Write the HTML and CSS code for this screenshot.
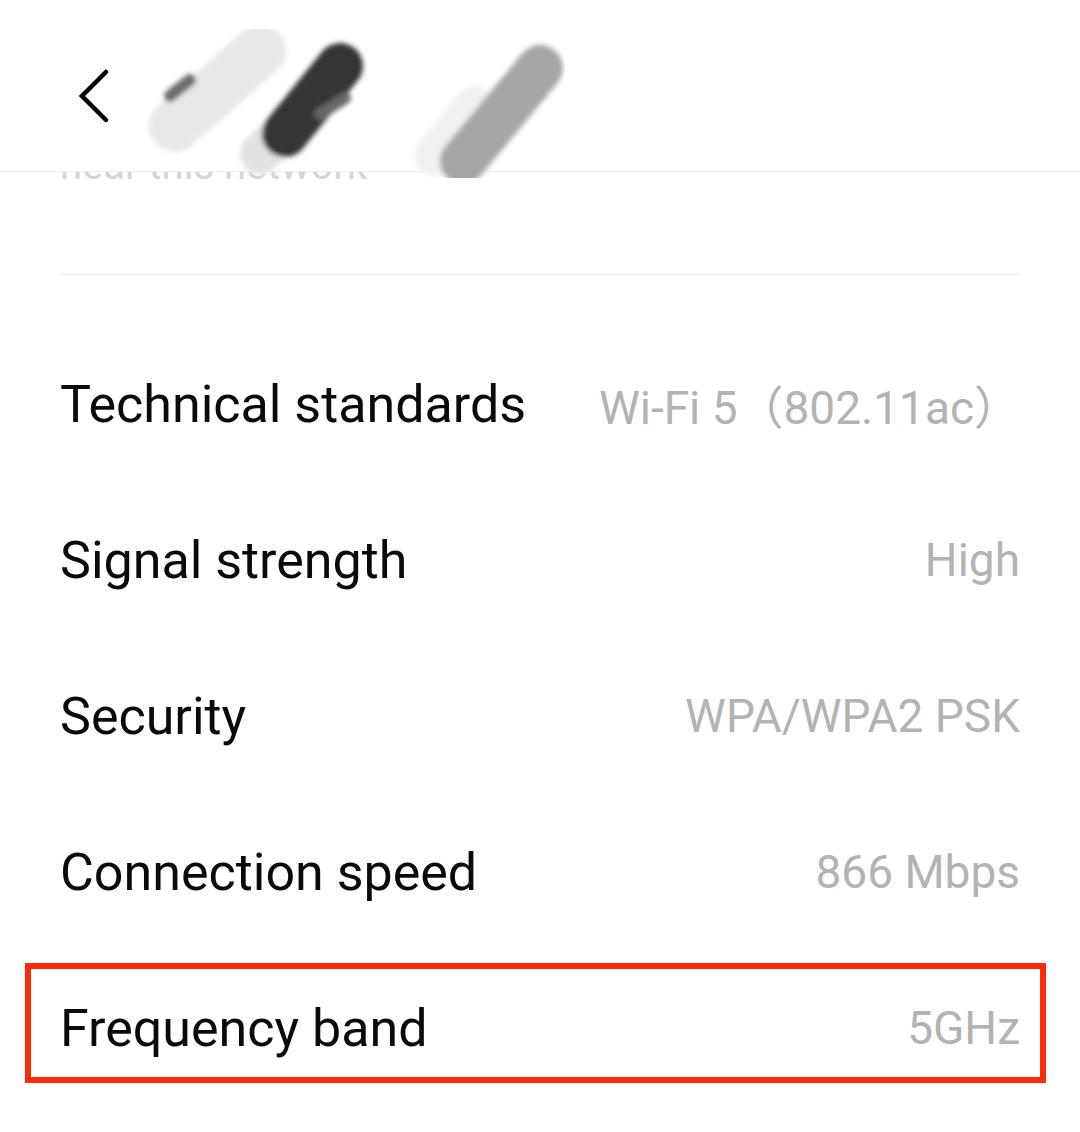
FILE: index.html
```html
<!DOCTYPE html>
<html>
<head>
<meta charset="utf-8">
<link rel="stylesheet" href="styles.css">
</head>
<body>
<div class="page">
  <header class="topbar">
    <svg class="back" width="40" height="60" viewBox="0 0 40 60">
      <polyline points="28,6 4,30 28,54" fill="none" stroke="#000" stroke-width="4.5" stroke-linecap="round" stroke-linejoin="miter"/>
    </svg>
    <svg class="scribble" width="420" height="172" viewBox="0 0 420 172">
      <defs>
        <filter id="soft" x="-20%" y="-20%" width="140%" height="140%"><feGaussianBlur stdDeviation="2.5"/></filter>
      </defs>
      <g filter="url(#soft)" stroke-linecap="round" fill="none">
        <line x1="30" y1="120" x2="115" y2="45" stroke="#e8e8e8" stroke-width="52"/>
        <line x1="115" y1="148" x2="170" y2="95" stroke="#e2e2e2" stroke-width="40"/>
        <line x1="140" y1="128" x2="195" y2="60" stroke="#363636" stroke-width="46"/>
        <line x1="175" y1="108" x2="200" y2="92" stroke="#666" stroke-width="12"/>
        <line x1="25" y1="90" x2="45" y2="74" stroke="#6a6a6a" stroke-width="12"/>
        <line x1="290" y1="150" x2="330" y2="100" stroke="#f0f0f0" stroke-width="40"/>
        <line x1="318" y1="155" x2="395" y2="62" stroke="#a6a6a6" stroke-width="46"/>
      </g>
    </svg>
  </header>
  <div class="clip-line"><span>near this network</span></div>
  <div class="divider"></div>
  <main class="list">
    <div class="row"><span class="label">Technical standards</span><span class="value">Wi-Fi 5（802.11ac）</span></div>
    <div class="row"><span class="label">Signal strength</span><span class="value">High</span></div>
    <div class="row"><span class="label">Security</span><span class="value">WPA/WPA2 PSK</span></div>
    <div class="row"><span class="label">Connection speed</span><span class="value">866 Mbps</span></div>
    <div class="row marked"><span class="label">Frequency band</span><span class="value">5GHz</span><span class="highlight"></span></div>
  </main>
</div>
</body>
</html>
```

FILE: styles.css
```css
html, body {
  margin: 0;
  padding: 0;
  background: #fff;
}
.page {
  width: 1080px;
  height: 1132px;
  overflow: hidden;
  font-family: Roboto, "Noto Sans CJK SC", sans-serif;
}
.topbar {
  height: 172px;
  border-bottom: 1px solid #efefef;
  display: flex;
  align-items: center;
  box-sizing: border-box;
  position: relative;
  z-index: 1;
}
.back {
  margin-left: 78px;
  margin-top: 20px;
  flex: none;
}
.scribble {
  margin-left: 27px;
  margin-top: 12px;
  flex: none;
}
.clip-line {
  height: 9px;
  overflow: hidden;
  margin-left: 60px;
  color: #d6d6d6;
  font-size: 40px;
  line-height: 40px;
}
.clip-line span {
  display: block;
  margin-top: -26px;
}
.divider {
  margin: 93px 60px 0;
  height: 1px;
  background: #efefef;
}
.list {
  margin-top: 51px;
  padding: 0 60px;
}
.row {
  height: 156px;
  display: flex;
  align-items: center;
  justify-content: space-between;
  position: relative;
}
.label {
  font-size: 52px;
  color: #0a0a0a;
}
.value {
  font-size: 46px;
  color: #b3b3b3;
}
.highlight {
  position: absolute;
  left: -35px;
  right: -26px;
  top: 13px;
  height: 120px;
  border: 6px solid #ff2a0c;
  box-sizing: border-box;
}
```
